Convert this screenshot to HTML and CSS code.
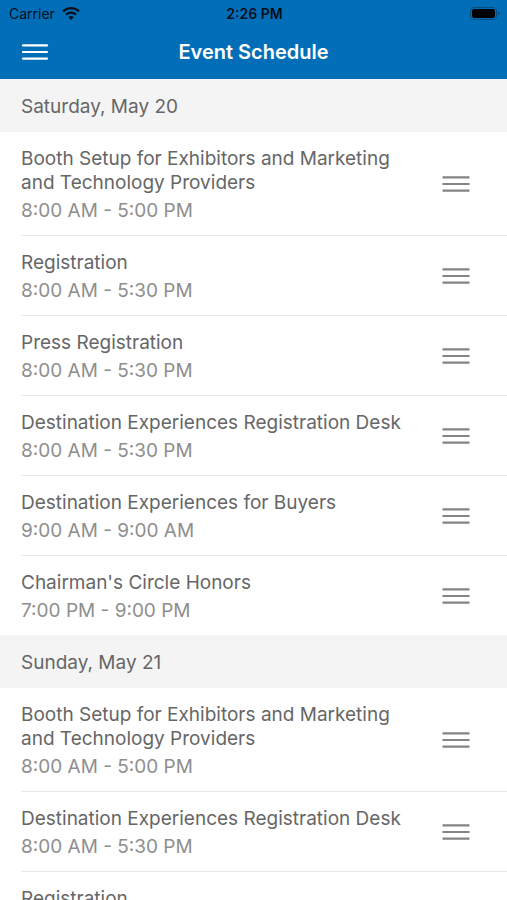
FILE: index.html
```html
<!DOCTYPE html>
<html lang="en">
<head>
<meta charset="utf-8">
<meta name="viewport" content="width=device-width, initial-scale=1">
<title>Event Schedule</title>
<link rel="stylesheet" href="styles.css">
</head>
<body>
<header class="top">
  <div class="status">
    <div class="carrier"><span>Carrier</span>
      <svg class="wifi" viewBox="0 0 18 14" aria-hidden="true"><path d="M1 4.4a11.4 11.4 0 0 1 16 0M4 7.7a7.2 7.2 0 0 1 10 0" fill="none" stroke="currentColor" stroke-width="2.3"/><path d="M9 13 6.3 10.2a4 4 0 0 1 5.4 0z" fill="currentColor"/></svg>
    </div>
    <div class="clock">2:26 PM</div>
    <svg class="battery" viewBox="0 0 30 14" aria-hidden="true"><rect x="0.5" y="0.5" width="26" height="12" rx="3.5" fill="none" stroke="currentColor" stroke-opacity=".35"/><rect x="2" y="2" width="23" height="9" rx="2.2" fill="#000"/><path d="M28 4.5a2.4 2.4 0 0 1 0 4z" fill="currentColor" fill-opacity=".45"/></svg>
  </div>
  <div class="nav">
    <button class="icon-button menu" type="button" aria-label="Menu"><svg class="bars" viewBox="0 0 28 18" aria-hidden="true"><path d="M2 2.4h24M2 9h24M2 15.6h24"/></svg></button>
    <h1>Event Schedule</h1>
  </div>
</header>
<main id="schedule"></main>
<script src="script.js"></script>
</body>
</html>
```
FILE: styles.css
```css
* { box-sizing: border-box; }
body {
  display: flex;
  flex-direction: column;
  margin: 0;
  height: 100vh;
  background: #fff;
  color: #666;
  font: 19px/24px Inter, "Liberation Sans", sans-serif;
}
h1, h2, h3, p, ul { margin: 0; padding: 0; font-weight: 400; }
ul { list-style: none; }
main { flex: 1; min-height: 0; overflow-y: auto; scrollbar-width: none; }
.top { background: #036eb8; }
.status {
  display: grid;
  grid-template-columns: 1fr auto 1fr;
  align-items: center;
  height: 27px;
  padding: 0 7px 0 9px;
  color: #03101c;
  font-size: 14px;
  line-height: 18px;
}
.carrier { display: flex; align-items: center; gap: 7px; }
.wifi { width: 18px; height: 14px; }
.clock { font-weight: 600; }
.battery { width: 30px; height: 14px; justify-self: end; }
.nav {
  display: grid;
  grid-template-columns: 1fr auto 1fr;
  align-items: center;
  height: 52px;
  padding: 0 21px 2px;
  color: #fff;
}
.nav h1 { font-size: 20px; font-weight: 600; }
.icon-button {
  display: block;
  flex: none;
  width: 28px;
  height: 18px;
  padding: 0;
  border: 0;
  background: none;
  color: #858585;
}
.menu { color: #fff; }
.menu .bars { stroke-linecap: round; }
.bars { display: block; width: 28px; height: 18px; fill: none; stroke: currentColor; stroke-width: 2.2; }
.day { padding: 16px 21px 13px; background: #f4f4f4; font-size: 19px; line-height: 24px; }
.event {
  display: flex;
  align-items: center;
  gap: 24px;
  margin-left: 21px;
  padding-right: 37px;
  border-bottom: 1px solid #e8e8e8;
}
.event:last-child { border-bottom: 0; }
.info { flex: 1; padding: 15px 0 8px; }
.info h3 { font-size: 19px; line-height: 24px; }
.info p { color: #8e8e8e; font-size: 19px; line-height: 32px; }
```
FILE: script.js
```js
const booth = ["Booth Setup for Exhibitors and Marketing and Technology Providers", "8:00 AM - 5:00 PM"];
const desk = ["Destination Experiences Registration Desk", "8:00 AM - 5:30 PM"];
const registration = ["Registration", "8:00 AM - 5:30 PM"];
const days = [
  ["Saturday, May 20", [booth, registration, ["Press Registration", "8:00 AM - 5:30 PM"], desk,
    ["Destination Experiences for Buyers", "9:00 AM - 9:00 AM"],
    ["Chairman's Circle Honors", "7:00 PM - 9:00 PM"]]],
  ["Sunday, May 21", [booth, desk, registration]]
];
const row = ([title, time]) => `<li class="event">
  <div class="info"><h3>${title}</h3><p>${time}</p></div>
  <button class="icon-button" type="button" aria-label="Options for ${title}"><svg class="bars" viewBox="0 0 28 18" aria-hidden="true"><path d="M.5 2.4h27M.5 9h27M.5 15.6h27"/></svg></button>
</li>`;
document.getElementById("schedule").innerHTML = days.map(([day, events]) =>
  `<section><h2 class="day">${day}</h2><ul>${events.map(row).join("")}</ul></section>`).join("");
```
